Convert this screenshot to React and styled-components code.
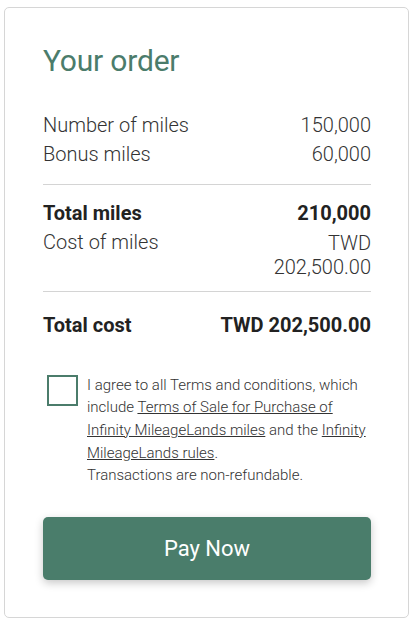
import React from "react";
import styled, { createGlobalStyle } from "styled-components";

const Global = createGlobalStyle`
  html, body { margin: 0; padding: 0; background: #fff; }
  body { padding: 7px 8px 8px 4px; font-family: Roboto, "Liberation Sans", sans-serif; color: #333; }
  * { box-sizing: border-box; }
`;

const Card = styled.div`
  width: 405px;
  height: 611px;
  border: 1px solid #d6d6d6;
  border-radius: 5px;
  padding: 34px 37px 0 38px;
  display: flex;
  flex-direction: column;
`;

const Title = styled.h1`
  margin: 0;
  font-size: 30px;
  font-weight: 400;
  line-height: 37px;
  color: #4b7c6b;
  letter-spacing: -0.2px;
`;

const Section = styled.div`
  padding: ${(p) => p.$pad || "0"};
  border-bottom: ${(p) => (p.$divider ? "1px solid #d4d4d4" : "none")};
`;

const Row = styled.div`
  display: flex;
  justify-content: space-between;
  align-items: flex-start;
  font-size: 20px;
  line-height: 29px;
  font-weight: ${(p) => (p.$bold ? 700 : 300)};
  color: ${(p) => (p.$bold ? "#222" : "#333")};
`;

const Value = styled.span`
  text-align: right;
  max-width: ${(p) => (p.$narrow ? "110px" : "none")};
  line-height: ${(p) => (p.$narrow ? "24px" : "inherit")};
  margin-top: ${(p) => (p.$narrow ? "2.5px" : "0")};
`;

const Agree = styled.div`
  display: flex;
  gap: 9px;
  padding: 34px 0 0 4px;
`;

const Box = styled.div`
  flex: none;
  width: 31px;
  height: 31px;
  border: 2.5px solid #4b7c6b;
  margin-top: 1.5px;
`;

const AgreeText = styled.p`
  margin: 0;
  font-size: 15px;
  line-height: 22.7px;
  font-weight: 300;
  color: #333;
  a { color: #333; text-decoration: underline; }
`;

const PayButton = styled.button`
  margin-top: 30px;
  height: 63px;
  border: none;
  border-radius: 5px;
  background: #4a7d6b;
  color: #fff;
  font-family: Roboto, "Liberation Sans", sans-serif;
  font-size: 22px;
  font-weight: 400;
  box-shadow: 0 3px 8px rgba(0, 0, 0, 0.22);
  cursor: pointer;
`;

export default function App() {
  return (
    <>
      <Global />
      <Card>
        <Title>Your order</Title>
        <Section $divider $pad="32px 0 15px">
          <Row><span>Number of miles</span><span>150,000</span></Row>
          <Row><span>Bonus miles</span><span>60,000</span></Row>
        </Section>
        <Section $divider $pad="14px 0 12px">
          <Row $bold><span>Total miles</span><span>210,000</span></Row>
          <Row><span>Cost of miles</span><Value $narrow>TWD 202,500.00</Value></Row>
        </Section>
        <Section $pad="19px 0 0">
          <Row $bold><span>Total cost</span><span>TWD 202,500.00</span></Row>
        </Section>
        <Agree>
          <Box />
          <AgreeText>
            I agree to all Terms and conditions, which include{" "}
            <a href="#">Terms of Sale for Purchase of Infinity MileageLands miles</a> and the{" "}
            <a href="#">Infinity MileageLands rules</a>.
            <br />
            Transactions are non-refundable.
          </AgreeText>
        </Agree>
        <PayButton>Pay Now</PayButton>
      </Card>
    </>
  );
}
